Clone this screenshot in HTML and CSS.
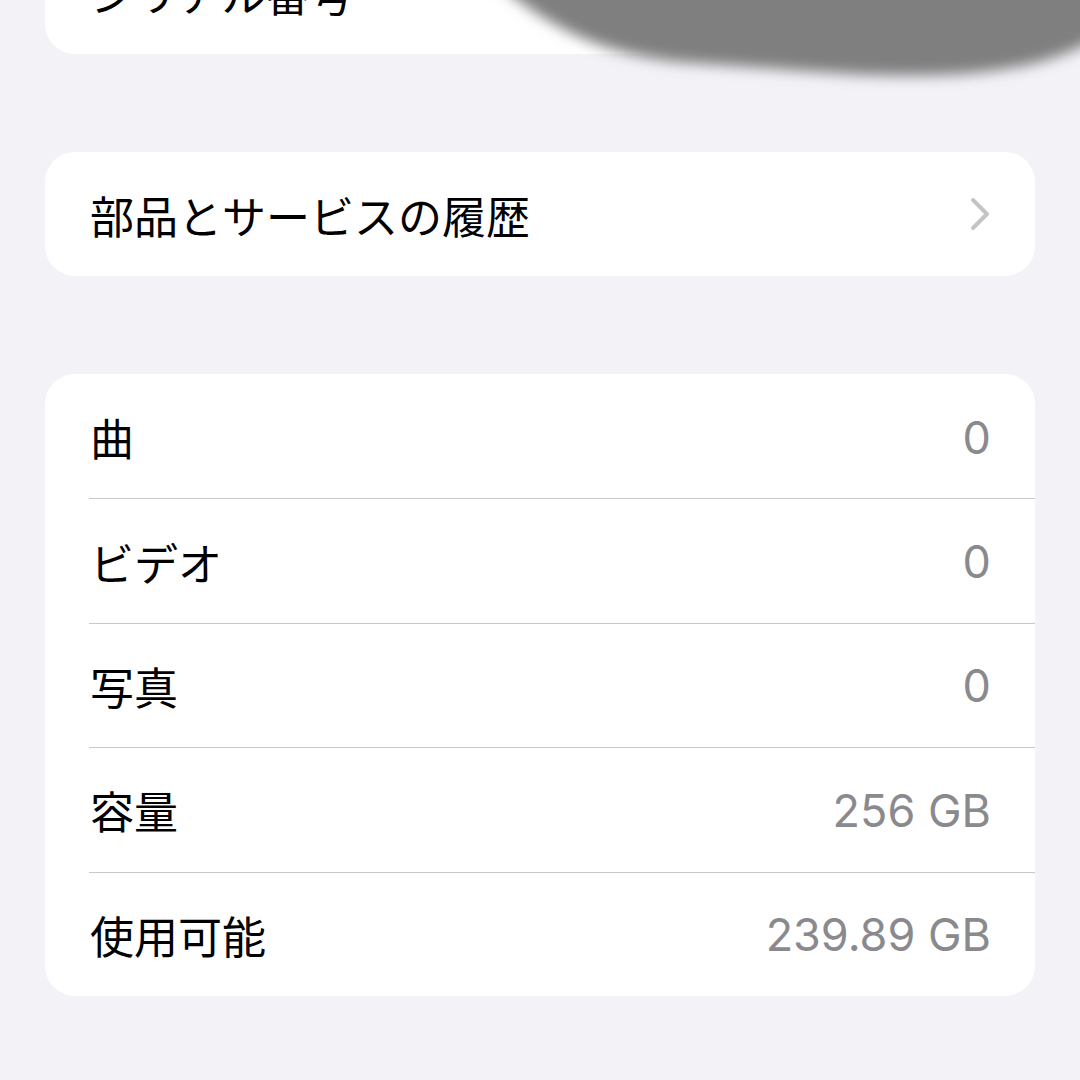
FILE: index.html
```html
<!DOCTYPE html>
<html lang="ja">
<head>
<meta charset="utf-8">
<link rel="stylesheet" href="styles.css">
</head>
<body>
<div class="page">
  <section class="card card-top">
    <div class="row"><span class="label">シリアル番号</span></div>
  </section>

  <section class="card">
    <div class="row">
      <span class="label">部品とサービスの履歴</span>
      <svg class="chevron" width="20" height="34" viewBox="0 0 20 34"><path d="M3 3 L17 17 L3 31" fill="none" stroke="#c4c4c7" stroke-width="4" stroke-linecap="round" stroke-linejoin="round"/></svg>
    </div>
  </section>

  <section class="card list">
    <div class="row"><span class="label">曲</span><span class="value">0</span></div>
    <div class="row"><span class="label">ビデオ</span><span class="value">0</span></div>
    <div class="row"><span class="label">写真</span><span class="value">0</span></div>
    <div class="row"><span class="label">容量</span><span class="value">256 GB</span></div>
    <div class="row"><span class="label">使用可能</span><span class="value">239.89 GB</span></div>
  </section>

  <svg class="redact" width="1080" height="110" viewBox="0 0 1080 110">
    <defs><filter id="b" x="-20%" y="-50%" width="140%" height="200%"><feGaussianBlur stdDeviation="7"/></filter></defs>
    <path d="M478 -30 C522 0 565 50 680 62 L820 72 C960 82 1050 72 1110 30 L1110 -30 Z" fill="#7f7f7f" filter="url(#b)"/>
  </svg>
</div>
</body>
</html>
```

FILE: styles.css
```css
html, body {
  margin: 0;
  padding: 0;
  background: #f2f2f7;
}
body {
  width: 1080px;
  height: 1080px;
  overflow: hidden;
  font-family: "Noto Sans CJK JP", "Noto Sans", sans-serif;
}
.page {
  position: relative;
  padding: 0 45px;
  display: flex;
  flex-direction: column;
  gap: 98px;
}
.card {
  background: #ffffff;
  border-radius: 30px;
  overflow: hidden;
}
.card-top {
  margin-top: -70px;
}
.row {
  height: 124px;
  display: flex;
  align-items: center;
  justify-content: space-between;
  padding: 0 45px 0 45px;
  box-sizing: border-box;
  position: relative;
}
.list .row {
  height: 124.4px;
  padding-right: 44px;
}
.list .row + .row::before {
  content: "";
  position: absolute;
  left: 44px;
  right: 0;
  top: 0;
  height: 1px;
  background: #c8c8cb;
}
.label {
  font-size: 44px;
  color: #000;
  line-height: 1;
  margin-top: 2px;
}
.value {
  font-family: "Inter", "Liberation Sans", sans-serif;
  font-size: 45px;
  color: #8a8a8e;
  line-height: 1;
  margin-top: 2px;
}
.chevron {
  display: block;
}
.redact {
  position: absolute;
  left: 0;
  top: 0;
  pointer-events: none;
}
```
